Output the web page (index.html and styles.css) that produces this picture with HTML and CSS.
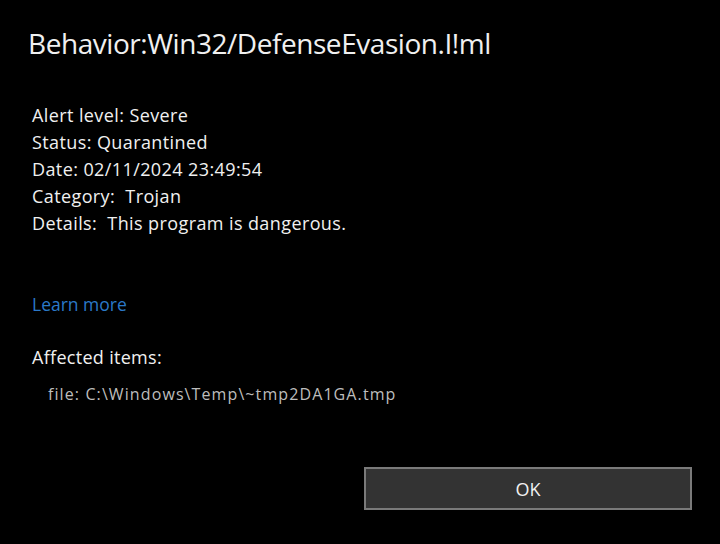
FILE: index.html
```html
<!DOCTYPE html>
<html>
<head>
<meta charset="utf-8">
<link rel="stylesheet" href="styles.css">
</head>
<body>
<div class="dialog">
  <h1 class="title">Behavior:Win32/DefenseEvasion.I!ml</h1>
  <div class="details">
    <div class="row">Alert level: Severe</div>
    <div class="row">Status: Quarantined</div>
    <div class="row">Date: 02/11/2024 23:49:54</div>
    <div class="row">Category:&nbsp; Trojan</div>
    <div class="row">Details:&nbsp; This program is dangerous.</div>
  </div>
  <a class="learn" href="#">Learn more</a>
  <div class="affected">Affected items:</div>
  <div class="file">file: C:\Windows\Temp\~tmp2DA1GA.tmp</div>
  <div class="actions">
    <button class="ok">OK</button>
  </div>
</div>
</body>
</html>
```
FILE: styles.css
```css
html, body {
  margin: 0;
  padding: 0;
  background: #000;
  width: 720px;
  height: 544px;
  overflow: hidden;
}
.dialog {
  font-family: "Open Sans", "Noto Sans", sans-serif;
  color: #f0f0f0;
  padding: 25px 28px 0 28px;
  display: flex;
  flex-direction: column;
}
.title {
  margin: 0;
  font-weight: 400;
  font-size: 28px;
  line-height: 36px;
  letter-spacing: -0.45px;
}
.details {
  margin-top: 41px;
  padding-left: 4px;
  display: flex;
  flex-direction: column;
}
.row {
  font-size: 18px;
  line-height: 27px;
  letter-spacing: 0.4px;
}
.learn {
  margin-top: 54px;
  padding-left: 4px;
  font-size: 17.5px;
  line-height: 27px;
  color: #2b79c9;
  text-decoration: none;
}
.affected {
  margin-top: 26px;
  padding-left: 4px;
  font-size: 18px;
  line-height: 27px;
  letter-spacing: 0.3px;
}
.file {
  margin-top: 12px;
  padding-left: 20px;
  font-size: 16px;
  line-height: 22px;
  letter-spacing: 1.1px;
  color: #bdbdbd;
}
.actions {
  margin-top: 62px;
  display: flex;
  justify-content: flex-end;
}
.ok {
  width: 328px;
  height: 43px;
  box-sizing: border-box;
  background: #333;
  border: 2px solid #7a7a7a;
  color: #f0f0f0;
  font-family: "Open Sans", "Noto Sans", sans-serif;
  font-size: 18px;
  padding: 0;
}
```
